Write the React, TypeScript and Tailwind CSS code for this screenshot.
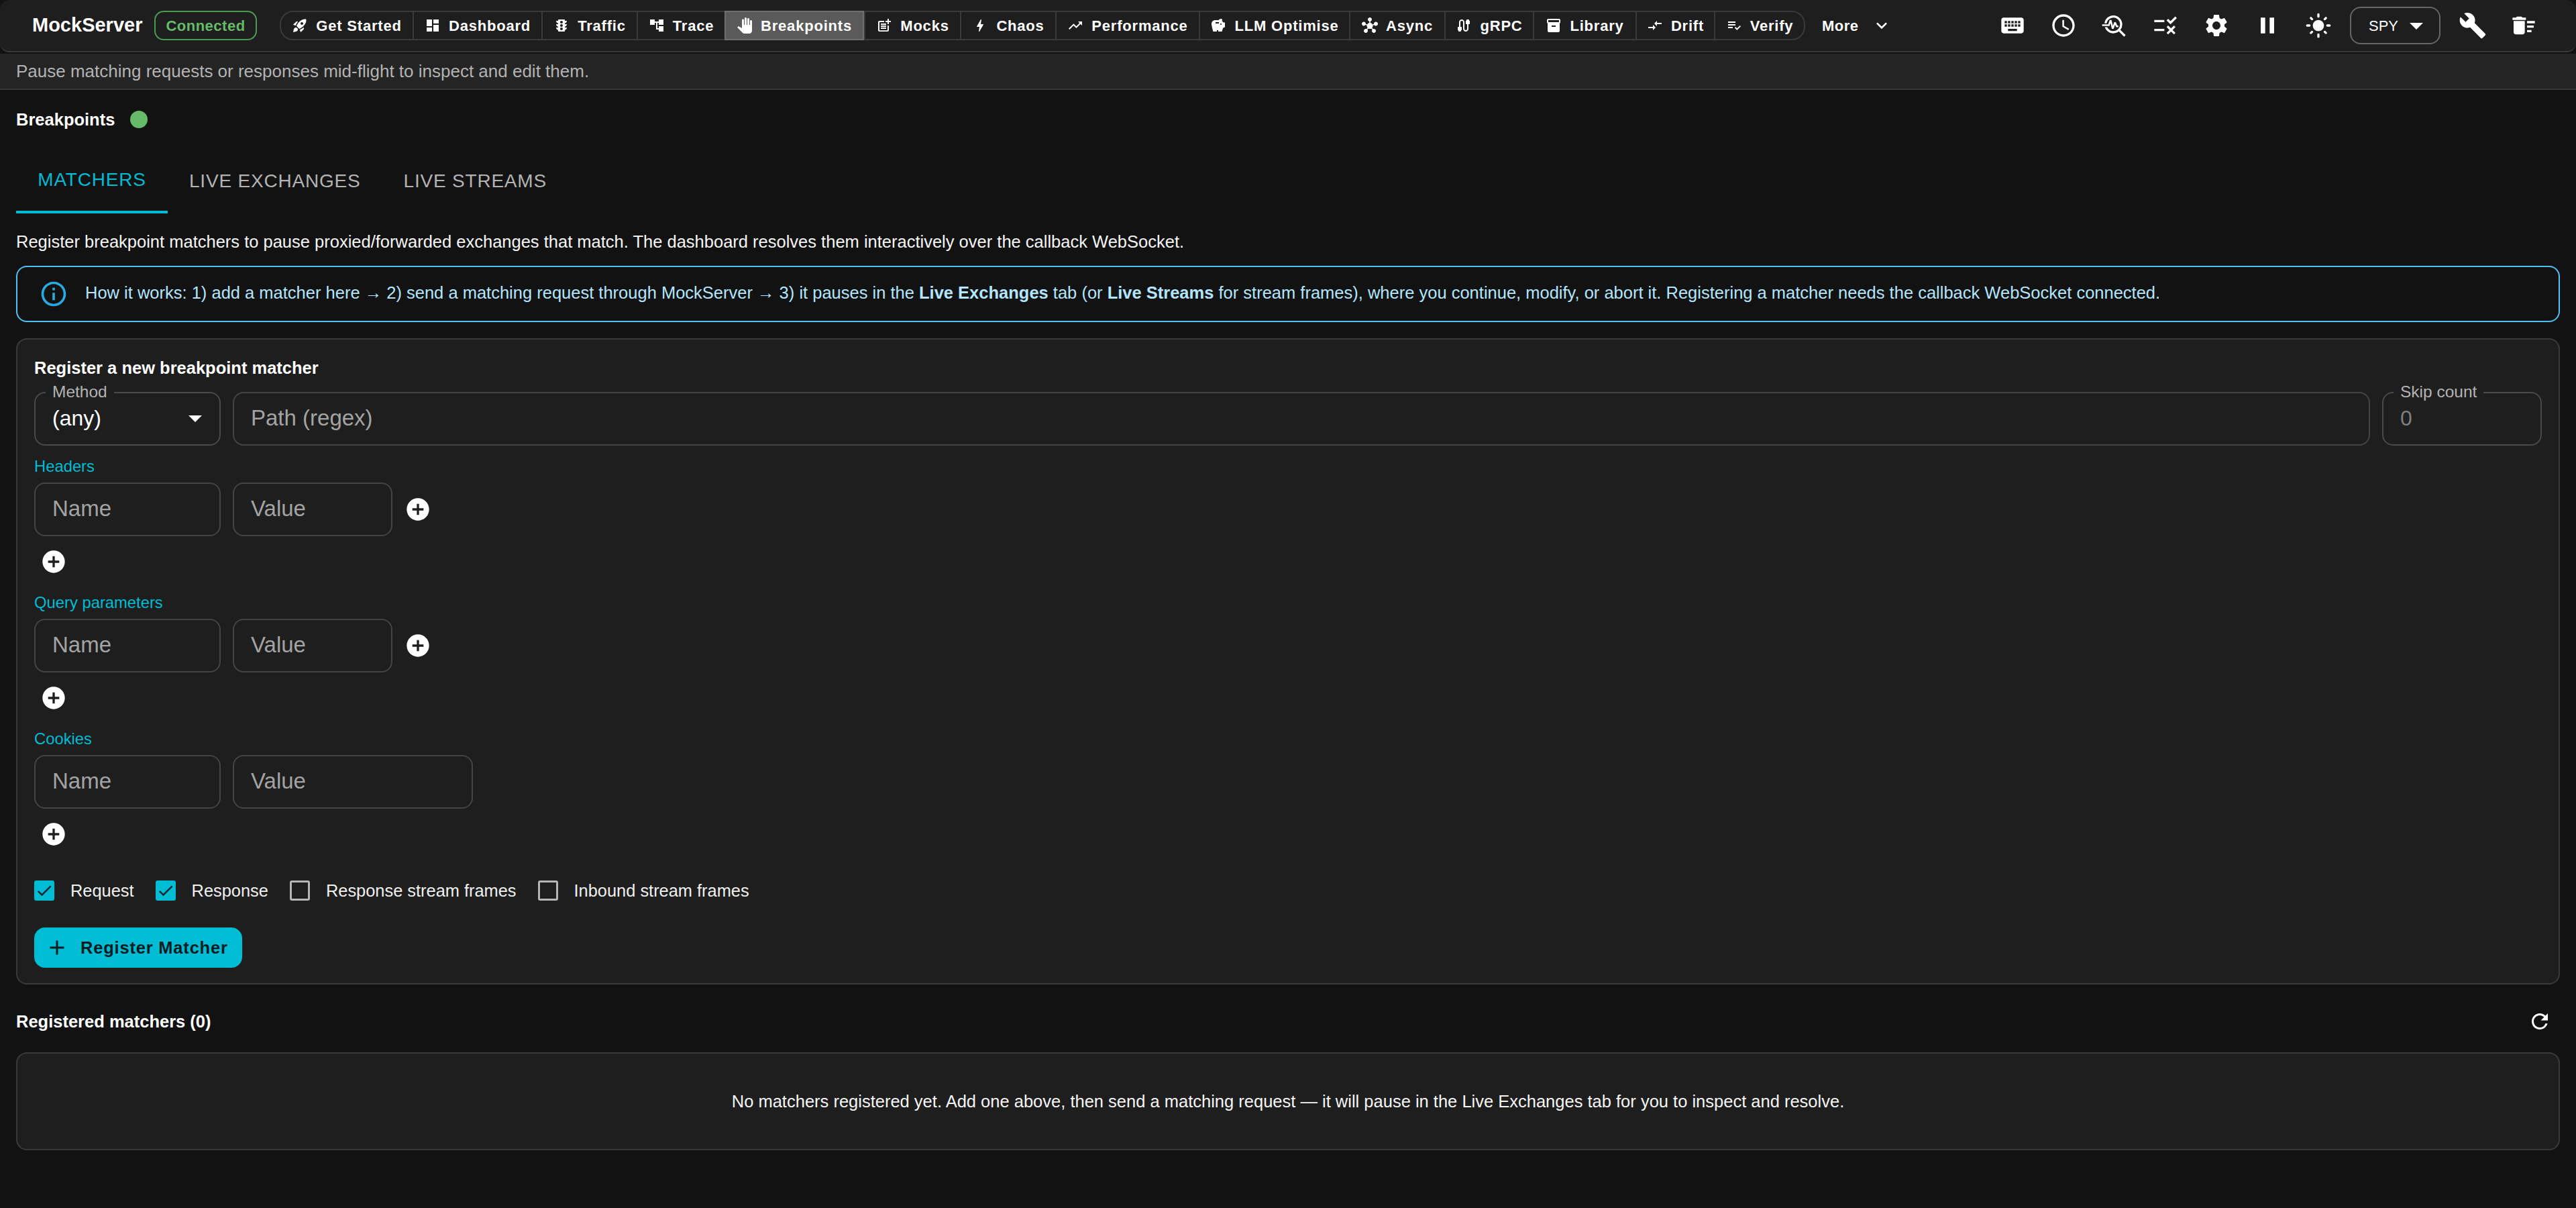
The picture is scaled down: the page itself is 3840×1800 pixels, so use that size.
import React from 'react';
import {
  MdAccessTime, MdAccountTree, MdAdd, MdAddCircle, MdArrowDropDown, MdBolt, MdBuild, MdCable, MdCheck,
  MdCompareArrows, MdDashboard, MdDeleteSweep, MdExpandMore, MdHub, MdInfoOutline, MdInventory2, MdKeyboard,
  MdLightMode, MdPanTool, MdPause, MdPlaylistAddCheck, MdPostAdd, MdRefresh, MdRocketLaunch,
  MdRule, MdSavings, MdSettings, MdTraffic, MdTrendingUp, MdTroubleshoot,
} from 'react-icons/md';

const navItems = [
  { label: 'Get Started', icon: MdRocketLaunch, width: 'w-[196px]' },
  { label: 'Dashboard', icon: MdDashboard, width: 'w-[192px]' },
  { label: 'Traffic', icon: MdTraffic, width: 'w-[142px]' },
  { label: 'Trace', icon: MdAccountTree, width: 'w-[131px]' },
  { label: 'Breakpoints', icon: MdPanTool, width: 'w-[208px]', active: true },
  { label: 'Mocks', icon: MdPostAdd, width: 'w-[143px]' },
  { label: 'Chaos', icon: MdBolt, width: 'w-[142px]' },
  { label: 'Performance', icon: MdTrendingUp, width: 'w-[214px]' },
  { label: 'LLM Optimise', icon: MdSavings, width: 'w-[224px]' },
  { label: 'Async', icon: MdHub, width: 'w-[142px]' },
  { label: 'gRPC', icon: MdCable, width: 'w-[132px]' },
  { label: 'Library', icon: MdInventory2, width: 'w-[153px]' },
  { label: 'Drift', icon: MdCompareArrows, width: 'w-[117px]' },
  { label: 'Verify', icon: MdPlaylistAddCheck, width: 'w-[134px]' },
];

const toolIcons = [MdKeyboard, MdAccessTime, MdTroubleshoot, MdRule, MdSettings, MdPause, MdLightMode];

function Field({ placeholder, className }: { placeholder: string; className: string }) {
  return (
    <div className={`h-[80px] shrink-0 flex items-center px-[25px] pb-[2px] border-2 border-[#444444] rounded-[16px] text-[33px] text-[#a3a3a3] ${className}`}>
      {placeholder}
    </div>
  );
}

function AddButton() {
  return <MdAddCircle size={40} className="text-white" />;
}

function KeyValueGroup({ title, valueWidth, showRowAdd = true }: { title: string; valueWidth: string; showRowAdd?: boolean }) {
  return (
    <div>
      <div className="text-[23.8px] leading-[30px] text-[#00bcd4]">{title}</div>
      <div className="flex items-center gap-[18px] mt-[9px]">
        <Field placeholder="Name" className="w-[278px]" />
        <Field placeholder="Value" className={valueWidth} />
        {showRowAdd && <AddButton />}
      </div>
      <div className="h-[40px] mt-[18px] pl-[9px] flex items-center">
        <AddButton />
      </div>
    </div>
  );
}

function Check({ label, checked }: { label: string; checked?: boolean }) {
  return (
    <div className="flex items-center gap-[24px]">
      {checked ? (
        <div className="w-[30px] h-[30px] rounded-[3px] bg-[#00bcd4] flex items-center justify-center">
          <MdCheck size={28} className="text-[#10242a]" />
        </div>
      ) : (
        <div className="w-[30px] h-[30px] rounded-[3px] border-[3px] border-[#b5b5b5]" />
      )}
      <span className="text-[25.4px] leading-[30px] text-[#f0f0f0]">{label}</span>
    </div>
  );
}

export default function App() {
  return (
    <div className="min-h-[1800px] bg-[#121212] text-white font-['Liberation_Sans',Arial,sans-serif]">
      {/* top bar */}
      <header className="h-[78px] bg-[#1e1e1e] border-b-2 border-[#3a3a3a] rounded-[14px] flex items-center pl-[48px] pr-[40px]">
        <span className="w-[182px] text-[29px] font-bold whitespace-nowrap">MockServer</span>
        <span className="w-[153px] h-[44px] flex items-center justify-center border-2 border-[#4c9a52] rounded-[14px] text-[#66bb6a] text-[22px] font-semibold tracking-[0.5px]">
          Connected
        </span>
        <nav className="ml-[34px] flex h-[44px] border-2 border-[#3a3a3a] rounded-[20px]">
          {navItems.map((item, i) => {
            const Icon = item.icon;
            return (
              <div
                key={item.label}
                className={`${item.width} flex items-center justify-center gap-[12px] text-[22px] font-bold tracking-[0.8px] whitespace-nowrap ${i > 0 && !item.active ? 'border-l-2 border-[#3a3a3a]' : ''} ${item.active ? '-my-[2px] border-2 border-[#707070] bg-[#5a5a5a]' : ''}`}
              >
                <Icon size={24} />
                {item.label}
              </div>
            );
          })}
        </nav>
        <div className="ml-[25px] flex items-center gap-[18px] text-[22px] font-bold tracking-[0.5px]">
          More
          <MdExpandMore size={32} />
        </div>
        <div className="ml-auto flex items-center">
          {toolIcons.map((Icon, i) => (
            <div key={i} className="w-[76px] flex justify-center">
              <Icon size={40} />
            </div>
          ))}
          <div className="ml-[9px] mr-[10px] w-[135px] h-[56px] border-2 border-[#666666] rounded-[16px] flex items-center pl-[26px] gap-[3px] text-[22px]">
            SPY
            <MdArrowDropDown size={48} />
          </div>
          <div className="w-[76px] flex justify-center"><MdBuild size={42} /></div>
          <div className="w-[76px] flex justify-center"><MdDeleteSweep size={40} /></div>
        </div>
      </header>

      <div className="mt-[2px] h-[54px] bg-[#242424] border-b-2 border-[#3a3a3a] px-[24px] flex items-center text-[26px] text-[#b3b3b3]">
        Pause matching requests or responses mid-flight to inspect and edit them.
      </div>

      <main className="px-[24px]">
        <div className="mt-[30px] h-[28px] flex items-center gap-[23px]">
          <span className="text-[25.5px] font-bold">Breakpoints</span>
          <span className="w-[26px] h-[26px] rounded-full bg-[#66bb6a]" />
        </div>

        {/* tabs */}
        <div className="mt-[30px] flex h-[96px] text-[28px] tracking-[0.8px] text-[#b3b3b3]">
          <div className="w-[226px] flex items-center justify-center text-[#00bcd4] border-b-4 border-[#00bcd4]">MATCHERS</div>
          <div className="px-[32px] flex items-center">LIVE EXCHANGES</div>
          <div className="px-[32px] flex items-center">LIVE STREAMS</div>
        </div>

        <p className="mt-[27px] h-[30px] flex items-center text-[25.5px] text-[#f5f5f5]">
          Register breakpoint matchers to pause proxied/forwarded exchanges that match. The dashboard resolves them interactively over the callback WebSocket.
        </p>

        {/* info alert */}
        <div className="mt-[21px] h-[84px] border-2 border-[#4fc3f7] rounded-[16px] flex items-center pl-[32px] gap-[25px] text-[25.5px] text-[#b3e5fc]">
          <MdInfoOutline size={44} className="text-[#29a9e0]" />
          <span className="pb-[3px]">
            How it works: 1) add a matcher here → 2) send a matching request through MockServer → 3) it pauses in the <b className="font-bold">Live Exchanges</b> tab (or <b className="font-bold">Live Streams</b> for stream frames), where you continue, modify, or abort it. Registering a matcher needs the callback WebSocket connected.
          </span>
        </div>

        {/* register form */}
        <section className="mt-[24px] h-[963px] bg-[#1e1e1e] border-2 border-[#3a3a3a] rounded-[16px] px-[25px] pt-[27px]">
          <h2 className="text-[25.5px] leading-[30px] font-bold">Register a new breakpoint matcher</h2>
          <div className="flex gap-[18px] mt-[21px]">
            <div className="relative w-[278px] h-[80px] shrink-0 border-2 border-[#4a4a4a] rounded-[16px] flex items-center justify-between pl-[25px] pr-[12px] pb-[2px] text-[32px]">
              <span className="absolute left-[15px] -top-[17px] px-[10px] bg-[#1e1e1e] text-[24.5px] leading-[30px] text-[#b3b3b3]">Method</span>
              (any)
              <MdArrowDropDown size={48} />
            </div>
            <Field placeholder="Path (regex)" className="flex-1" />
            <div className="relative w-[238px] h-[80px] shrink-0 border-2 border-[#4a4a4a] rounded-[16px] flex items-center pl-[25px] pb-[2px] text-[32px] text-[#7f7f7f]">
              <span className="absolute left-[15px] -top-[17px] px-[10px] bg-[#1e1e1e] text-[24.5px] leading-[30px] text-[#b3b3b3]">Skip count</span>
              0
            </div>
          </div>

          <div className="mt-[16px] flex flex-col gap-[26px]">
            <KeyValueGroup title="Headers" valueWidth="w-[238px]" />
            <KeyValueGroup title="Query parameters" valueWidth="w-[238px]" />
            <KeyValueGroup title="Cookies" valueWidth="w-[358px]" showRowAdd={false} />
          </div>

          <div className="mt-[49px] flex items-center gap-[32px]">
            <Check label="Request" checked />
            <Check label="Response" checked />
            <Check label="Response stream frames" />
            <Check label="Inbound stream frames" />
          </div>

          <div className="mt-[40px] w-[310px] h-[60px] bg-[#00bcd4] rounded-[16px] flex items-center pl-[16px] gap-[17px] text-[25.5px] font-bold tracking-[0.8px] text-[#0b1c20]">
            <MdAdd size={36} />
            Register Matcher
          </div>
        </section>

        <div className="mt-[39px] h-[32px] flex items-center justify-between pr-[12px]">
          <span className="text-[25.5px] font-bold">Registered matchers (0)</span>
          <MdRefresh size={36} />
        </div>

        <div className="mt-[30px] h-[146px] bg-[#1e1e1e] border-2 border-[#3a3a3a] rounded-[16px] flex items-center justify-center text-[25.5px] text-[#f5f5f5]">
          No matchers registered yet. Add one above, then send a matching request — it will pause in the Live Exchanges tab for you to inspect and resolve.
        </div>
      </main>
    </div>
  );
}
